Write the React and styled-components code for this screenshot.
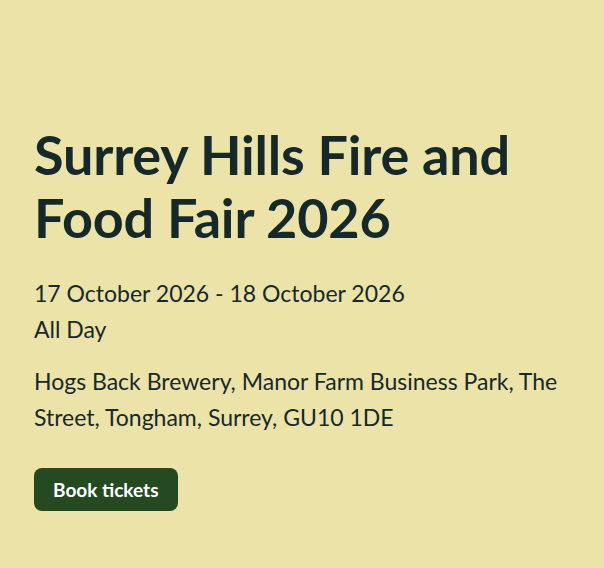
import React from 'react';
import styled, { createGlobalStyle } from 'styled-components';

const GlobalStyle = createGlobalStyle`
  html, body {
    margin: 0;
    padding: 0;
    background: #ebe3a7;
  }
`;

const EventHero = styled.section`
  box-sizing: border-box;
  min-height: 568px;
  padding: 123px 34px 40px;
  background: #ebe3a7;
  color: #16292a;
  font-family: Lato, "Open Sans", sans-serif;
`;

const Title = styled.h1`
  margin: 0 0 26px;
  font-size: 54px;
  line-height: 63px;
  font-weight: 700;
  letter-spacing: -0.2px;
  max-width: 520px;
`;

const Meta = styled.p`
  margin: 0 0 ${p => p.$gap || 0}px;
  font-size: 23px;
  line-height: 36px;
  font-weight: 400;
`;

const BookButton = styled.a`
  display: inline-flex;
  align-items: center;
  justify-content: center;
  margin-top: 33px;
  height: 43px;
  padding: 0 19px;
  border-radius: 8px;
  background: #254a22;
  color: #fff;
  font-size: 19px;
  font-weight: 700;
  text-decoration: none;
`;

const App = () => (
  <>
    <GlobalStyle />
    <EventHero>
      <Title>Surrey Hills Fire and Food Fair 2026</Title>
      <Meta>17 October 2026 - 18 October 2026</Meta>
      <Meta $gap={16}>All Day</Meta>
      <Meta>Hogs Back Brewery, Manor Farm Business Park, The Street, Tongham, Surrey, GU10 1DE</Meta>
      <BookButton href="#">Book tickets</BookButton>
    </EventHero>
  </>
);

export default App;
